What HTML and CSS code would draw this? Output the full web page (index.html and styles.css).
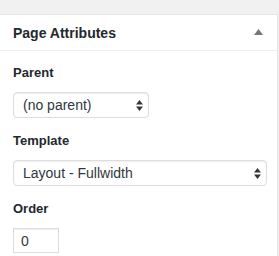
FILE: index.html
```html
<!DOCTYPE html>
<html lang="en">
  <head>
    <meta charset="UTF-8" />
    <meta name="viewport" content="width=device-width, initial-scale=1.0" />
    <title>Page Attributes</title>
    <link rel="stylesheet" href="styles.css">
  </head>

  <body>
    <div class="postbox">
      <div class="postbox-header">
        <h2>Page Attributes</h2>
        <svg class="toggle" width="9" height="6" viewBox="0 0 9 6">
          <path d="M4.5 0 L9 6 L0 6 Z" fill="#72777c" />
        </svg>
      </div>

      <div class="inside">
        <p class="label">Parent</p>
        <div class="select-wrap parent">
          <select>
            <option>(no parent)</option>
          </select>
          <svg class="arrows" width="7" height="11" viewBox="0 0 7 11">
            <path d="M3.5 0 L7 4.5 L0 4.5 Z M0 6.5 L7 6.5 L3.5 11 Z" fill="#32373c" />
          </svg>
        </div>

        <p class="label">Template</p>
        <div class="select-wrap template">
          <select>
            <option>Layout - Fullwidth</option>
          </select>
          <svg class="arrows" width="7" height="11" viewBox="0 0 7 11">
            <path d="M3.5 0 L7 4.5 L0 4.5 Z M0 6.5 L7 6.5 L3.5 11 Z" fill="#32373c" />
          </svg>
        </div>

        <p class="label">Order</p>
        <input class="order" type="text" value="0" />
      </div>
    </div>
  </body>
</html>
```

FILE: styles.css
```css
body {
  margin: 0;
  background-color: #f1f1f1;
  font-family: "Liberation Sans", Arial, sans-serif;
  color: #23282d;
}

.postbox {
  margin-top: 14px;
  margin-left: -1px;
  width: 277px;
  background-color: #fff;
  border: 1px solid #e5e5e5;
  box-shadow: 0 1px 1px rgba(0, 0, 0, 0.04);
}

.postbox-header {
  display: flex;
  align-items: center;
  justify-content: space-between;
  height: 35px;
  padding: 0 14px 0 13px;
  border-bottom: 1px solid #eee;
}

h2 {
  margin: 0;
  font-size: 14px;
  font-weight: bold;
  color: #23282d;
}

.toggle {
  margin-top: -1px;
}

.inside {
  padding: 12px 12px 4px 13px;
}

.label {
  margin: 0 0 9px;
  font-size: 13px;
  font-weight: bold;
  line-height: 20px;
  color: #23282d;
}

.select-wrap {
  position: relative;
  margin-bottom: 13px;
}

.select-wrap.parent {
  width: 136px;
}

.select-wrap.template {
  width: 254px;
}

select {
  appearance: none;
  -webkit-appearance: none;
  display: block;
  width: 100%;
  height: 26px;
  padding: 0 20px 0 9px;
  font-family: inherit;
  font-size: 14px;
  color: #32373c;
  background-color: #fff;
  border: 1px solid #ddd;
  border-radius: 4px;
  box-shadow: inset 0 1px 2px rgba(0, 0, 0, 0.07);
}

.arrows {
  position: absolute;
  right: 6px;
  top: 8px;
  pointer-events: none;
}

.order {
  display: block;
  width: 46px;
  height: 25px;
  box-sizing: border-box;
  padding: 0 7px;
  font-family: inherit;
  font-size: 14px;
  color: #32373c;
  border: 1px solid #ddd;
  border-radius: 0;
  box-shadow: inset 0 1px 2px rgba(0, 0, 0, 0.07);
}
```
